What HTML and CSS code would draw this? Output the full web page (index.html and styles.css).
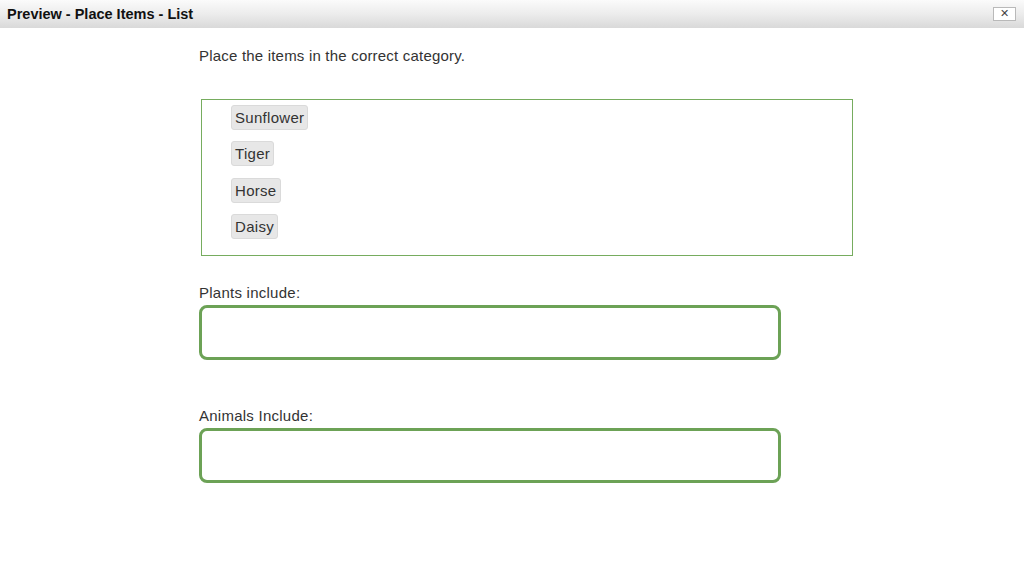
FILE: index.html
```html
<!DOCTYPE html>
<html>
<head>
<meta charset="utf-8">
<title>Preview - Place Items - List</title>
<link rel="stylesheet" href="styles.css">
</head>
<body>
<header class="titlebar">
  <span class="title">Preview - Place Items - List</span>
  <button class="close" aria-label="Close">&#x2715;</button>
</header>
<main class="content">
  <p class="instructions">Place the items in the correct category.</p>
  <div class="source">
    <span class="chip">Sunflower</span>
    <span class="chip">Tiger</span>
    <span class="chip">Horse</span>
    <span class="chip">Daisy</span>
  </div>
  <div class="category">
    <div class="cat-label">Plants include:</div>
    <div class="drop"></div>
  </div>
  <div class="category second">
    <div class="cat-label">Animals Include:</div>
    <div class="drop"></div>
  </div>
</main>
</body>
</html>
```

FILE: styles.css
```css
html, body {
  margin: 0;
  padding: 0;
  background: #ffffff;
  font-family: "Liberation Sans", Arial, sans-serif;
  color: #333333;
}

.titlebar {
  height: 28px;
  display: flex;
  align-items: center;
  justify-content: space-between;
  padding: 0 8px 0 7px;
  background: linear-gradient(to bottom, #fbfbfb 0%, #ececec 50%, #d9d9d9 100%);
  box-sizing: border-box;
}

.title {
  font-weight: bold;
  font-size: 14.5px;
  color: #111111;
}

.close {
  width: 23px;
  height: 14px;
  padding: 0;
  border: 1px solid #b9b9b9;
  background: #ffffff;
  color: #444444;
  font-family: "DejaVu Sans", sans-serif;
  font-size: 11px;
  font-weight: bold;
  line-height: 12px;
  display: flex;
  align-items: center;
  justify-content: center;
}

.content {
  margin-left: 199px;
  width: 654px;
}

.instructions {
  margin: 18px 0 0 0;
  font-size: 15px;
  letter-spacing: 0.2px;
  line-height: 20px;
}

.source {
  margin: 33px 0 0 2px;
  border: 1px solid #76ac5e;
  padding: 5px 0 16px 29px;
  display: flex;
  flex-direction: column;
  align-items: flex-start;
  gap: 11.33px;
}

.chip {
  background: #e7e7e7;
  border: 1px solid #dadada;
  border-radius: 3px;
  padding: 3px 3px;
  font-size: 15px;
  letter-spacing: 0.3px;
  line-height: 17px;
  color: #333333;
}

.category {
  margin-top: 28px;
}

.category.second {
  margin-top: 47px;
}

.cat-label {
  font-size: 15px;
  letter-spacing: 0.25px;
  line-height: 18px;
  margin-bottom: 3px;
}

.drop {
  width: 582px;
  height: 55px;
  box-sizing: border-box;
  border: 3px solid #6ca256;
  border-radius: 8px;
}
```
